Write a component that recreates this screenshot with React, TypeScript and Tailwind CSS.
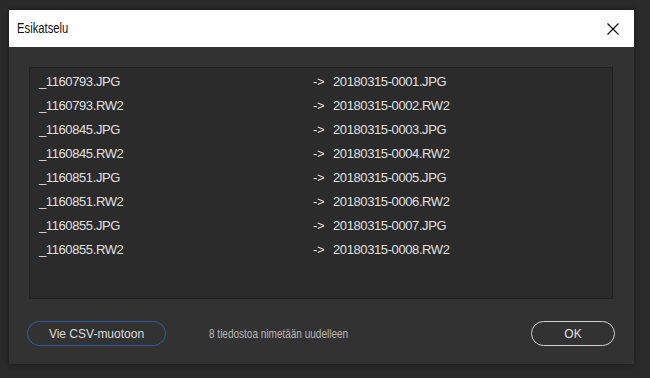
const FILES = [
    ['_1160793.JPG', '20180315-0001.JPG'],
    ['_1160793.RW2', '20180315-0002.RW2'],
    ['_1160845.JPG', '20180315-0003.JPG'],
    ['_1160845.RW2', '20180315-0004.RW2'],
    ['_1160851.JPG', '20180315-0005.JPG'],
    ['_1160851.RW2', '20180315-0006.RW2'],
    ['_1160855.JPG', '20180315-0007.JPG'],
    ['_1160855.RW2', '20180315-0008.RW2'],
];

const App = () => {
    return (
        <div className="w-[650px] h-[378px] bg-[#2a2a2a] pt-[10px] pl-[9px] font-['Liberation_Sans',Arial,sans-serif] overflow-hidden">
            <div className="w-[625px] h-[354px] flex flex-col bg-[#323232] shadow-[0_0_6px_rgba(0,0,0,0.45)]">
                {/* Title bar */}
                <div className="h-[37px] bg-white flex items-center justify-between pl-[8px] pr-[15px]">
                    <span className="inline-block text-[15px] text-[#111] scale-x-[0.75] origin-left">Esikatselu</span>
                    <svg width="12" height="12" viewBox="0 0 12 12" className="text-black">
                        <path d="M0.5 0.5 L11.5 11.5 M11.5 0.5 L0.5 11.5" stroke="currentColor" strokeWidth="1.1" fill="none" />
                    </svg>
                </div>

                {/* Body */}
                <div className="flex-1 flex flex-col pt-5 pl-5 pr-[21px]">
                    <div className="h-[232px] bg-[#2b2b2b] border border-[#222] pt-[2px] pl-[9px]">
                        {FILES.map(([from, to]) => (
                            <div key={from} className="h-6 flex items-center text-[13px] tracking-[-0.4px] text-[#e0e0e0]">
                                <span className="w-[274px]">{from}</span>
                                <span className="w-[20px]">-&gt;</span>
                                <span>{to}</span>
                            </div>
                        ))}
                    </div>

                    <div className="flex items-center mt-[22px] -ml-[2px] -mr-[2px]">
                        <button className="w-[139px] h-[25px] rounded-full border-[1.5px] border-[#2f5c9a] text-[12px] text-[#dcdcdc]">
                            Vie CSV-muotoon
                        </button>
                        <span className="ml-[43px] inline-block text-[13px] text-[#b8b8b8] scale-x-[0.77] origin-left whitespace-nowrap">
                            8 tiedostoa nimetään uudelleen
                        </span>
                        <button className="ml-auto w-[84px] h-[25px] rounded-full border-[1.5px] border-[#cfcfcf] text-[12px] text-[#e0e0e0]">
                            OK
                        </button>
                    </div>
                </div>
            </div>
        </div>
    );
};

export default App;
